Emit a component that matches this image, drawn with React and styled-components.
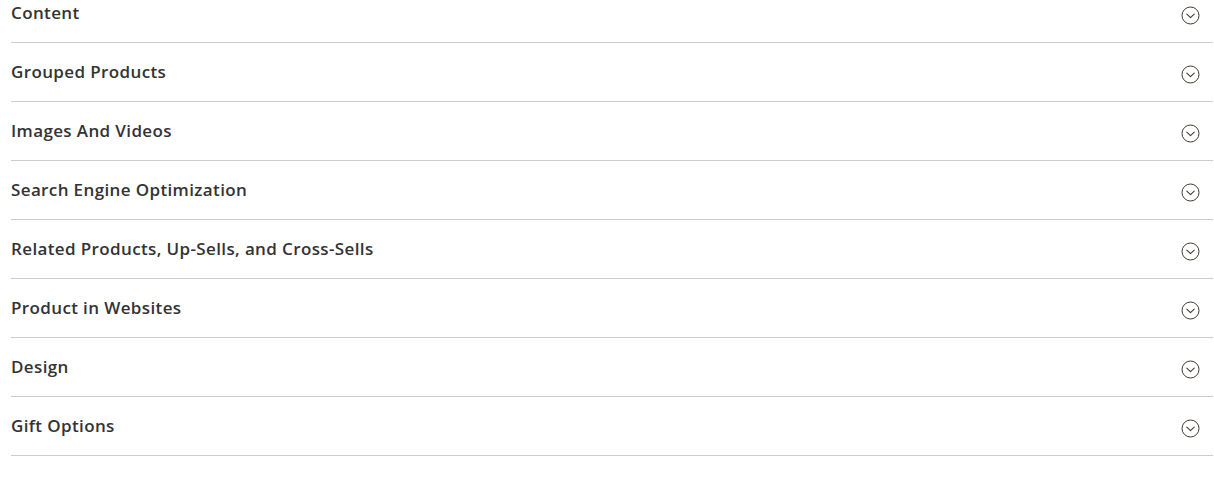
import React from "react";
import styled, { createGlobalStyle } from "styled-components";

const Global = createGlobalStyle`
  html, body { margin: 0; padding: 0; background: #fff; }
  body { font-family: "Open Sans", "Noto Sans", sans-serif; overflow: hidden; }
`;

const Wrapper = styled.div`
  margin-top: -16px;
  padding: 0 1px 0 11px;
`;

const Section = styled.div`
  display: flex;
  align-items: center;
  justify-content: space-between;
  height: 58px;
  border-bottom: 1px solid #cccccc;
  cursor: pointer;
`;

const Title = styled.span`
  font-size: 17px;
  font-weight: 600;
  color: #333333;
  letter-spacing: 0.022em;
  margin-top: -2px;
`;

const IconWrap = styled.span`
  display: flex;
  margin-right: 13px;
  margin-top: 4px;
  color: #41362f;
`;

const ChevronCircle = () => (
  <svg width="19" height="19" viewBox="0 0 19 19" fill="none">
    <circle cx="9.5" cy="9.5" r="8.5" stroke="currentColor" strokeWidth="1" />
    <path d="M5.8 8.2 L9.5 11.6 L13.2 8.2" stroke="currentColor" strokeWidth="1.1" strokeLinecap="round" strokeLinejoin="round" />
  </svg>
);

const sections = [
  "Content",
  "Grouped Products",
  "Images And Videos",
  "Search Engine Optimization",
  "Related Products, Up-Sells, and Cross-Sells",
  "Product in Websites",
  "Design",
  "Gift Options",
];

export default function App() {
  return (
    <>
      <Global />
      <Wrapper>
        {sections.map((s) => (
          <Section key={s}>
            <Title>{s}</Title>
            <IconWrap>
              <ChevronCircle />
            </IconWrap>
          </Section>
        ))}
      </Wrapper>
    </>
  );
}
